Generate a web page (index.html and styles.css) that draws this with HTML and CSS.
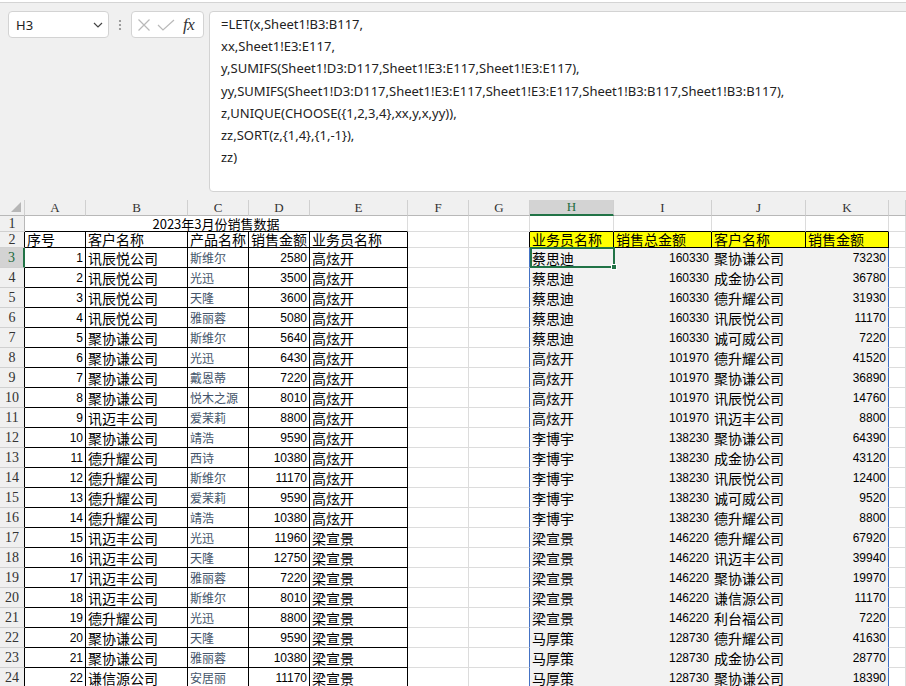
FILE: index.html
```html
<!DOCTYPE html>
<html lang="zh-CN">
<head>
<meta charset="utf-8">
<title>Sheet1</title>
<link rel="stylesheet" href="styles.css">
</head>
<body>
<div class="ribbon"></div>
<div class="fbar">
  <div class="namebox"><span>H3</span>
    <svg class="chev" width="10" height="6" viewBox="0 0 10 6"><path d="M1 1 L5 5 L9 1" fill="none" stroke="#444" stroke-width="1.2"/></svg>
  </div>
  <div class="dots"><svg width="4" height="12" viewBox="0 0 4 12"><circle cx="2" cy="2" r="1.1" fill="#8a8a8a"/><circle cx="2" cy="6" r="1.1" fill="#8a8a8a"/><circle cx="2" cy="10" r="1.1" fill="#8a8a8a"/></svg></div>
  <div class="fbtns">
    <svg width="14" height="14" viewBox="0 0 14 14"><path d="M1.5 1.5 L12.5 12.5 M12.5 1.5 L1.5 12.5" stroke="#b9b9b9" stroke-width="1.2" fill="none"/></svg>
    <svg width="18" height="12" viewBox="0 0 18 12"><path d="M1 6 L6 11 L17 1" stroke="#b9b9b9" stroke-width="1.2" fill="none"/></svg>
    <span class="fx">fx</span>
  </div>
  <div class="formula">
    <div>=LET(x,Sheet1!B3:B117,</div>
    <div>xx,Sheet1!E3:E117,</div>
    <div>y,SUMIFS(Sheet1!D3:D117,Sheet1!E3:E117,Sheet1!E3:E117),</div>
    <div>yy,SUMIFS(Sheet1!D3:D117,Sheet1!E3:E117,Sheet1!E3:E117,Sheet1!B3:B117,Sheet1!B3:B117),</div>
    <div>z,UNIQUE(CHOOSE({1,2,3,4},xx,y,x,yy)),</div>
    <div>zz,SORT(z,{1,4},{1,-1}),</div>
    <div>zz)</div>
  </div>
</div>
<div class="sheet">
  <div class="h corner"><div class="tri"></div></div>
  <div class="h">A</div><div class="h">B</div><div class="h">C</div><div class="h">D</div><div class="h">E</div><div class="h">F</div><div class="h">G</div><div class="h act">H</div><div class="h">I</div><div class="h">J</div><div class="h">K</div><div class="h"></div>

  <div class="r">1</div><div class="c t">2023年3月份销售数据</div><div class="c"></div><div class="c"></div><div class="c bb"></div><div class="c bb"></div><div class="c bb"></div><div class="c bb"></div><div class="c"></div>

  <div class="r bk">2</div><div class="c b hd">序号</div><div class="c b hd">客户名称</div><div class="c b hd">产品名称</div><div class="c b hd">销售金额</div><div class="c b hd">业务员名称</div><div class="c"></div><div class="c gb"></div><div class="c y">业务员名称</div><div class="c y">销售总金额</div><div class="c y">客户名称</div><div class="c y">销售金额</div><div class="c"></div>

  <div class="r act">3</div><div class="c b n">1</div><div class="c b">讯辰悦公司</div><div class="c b p">斯维尔</div><div class="c b n">2580</div><div class="c b">高炫开</div><div class="c"></div><div class="c gs"></div><div class="c s ac">蔡思迪<span class="sel"><span class="handle"></span></span></div><div class="c s n">160330</div><div class="c s">聚协谦公司</div><div class="c s k n">73230</div><div class="c"></div>

  <div class="r bk">4</div><div class="c b n">2</div><div class="c b">讯辰悦公司</div><div class="c b p">光迅</div><div class="c b n">3500</div><div class="c b">高炫开</div><div class="c"></div><div class="c gs"></div><div class="c s">蔡思迪</div><div class="c s n">160330</div><div class="c s">成金协公司</div><div class="c s k n">36780</div><div class="c"></div>

  <div class="r bk">5</div><div class="c b n">3</div><div class="c b">讯辰悦公司</div><div class="c b p">天隆</div><div class="c b n">3600</div><div class="c b">高炫开</div><div class="c"></div><div class="c gs"></div><div class="c s">蔡思迪</div><div class="c s n">160330</div><div class="c s">德升耀公司</div><div class="c s k n">31930</div><div class="c"></div>

  <div class="r bk">6</div><div class="c b n">4</div><div class="c b">讯辰悦公司</div><div class="c b p">雅丽蓉</div><div class="c b n">5080</div><div class="c b">高炫开</div><div class="c"></div><div class="c gs"></div><div class="c s">蔡思迪</div><div class="c s n">160330</div><div class="c s">讯辰悦公司</div><div class="c s k n">11170</div><div class="c"></div>

  <div class="r bk">7</div><div class="c b n">5</div><div class="c b">聚协谦公司</div><div class="c b p">斯维尔</div><div class="c b n">5640</div><div class="c b">高炫开</div><div class="c"></div><div class="c gs"></div><div class="c s">蔡思迪</div><div class="c s n">160330</div><div class="c s">诚可威公司</div><div class="c s k n">7220</div><div class="c"></div>

  <div class="r bk">8</div><div class="c b n">6</div><div class="c b">聚协谦公司</div><div class="c b p">光迅</div><div class="c b n">6430</div><div class="c b">高炫开</div><div class="c"></div><div class="c gs"></div><div class="c s">高炫开</div><div class="c s n">101970</div><div class="c s">德升耀公司</div><div class="c s k n">41520</div><div class="c"></div>

  <div class="r bk">9</div><div class="c b n">7</div><div class="c b">聚协谦公司</div><div class="c b p">戴恩蒂</div><div class="c b n">7220</div><div class="c b">高炫开</div><div class="c"></div><div class="c gs"></div><div class="c s">高炫开</div><div class="c s n">101970</div><div class="c s">聚协谦公司</div><div class="c s k n">36890</div><div class="c"></div>

  <div class="r bk">10</div><div class="c b n">8</div><div class="c b">聚协谦公司</div><div class="c b p">悦木之源</div><div class="c b n">8010</div><div class="c b">高炫开</div><div class="c"></div><div class="c gs"></div><div class="c s">高炫开</div><div class="c s n">101970</div><div class="c s">讯辰悦公司</div><div class="c s k n">14760</div><div class="c"></div>

  <div class="r bk">11</div><div class="c b n">9</div><div class="c b">讯迈丰公司</div><div class="c b p">爱茉莉</div><div class="c b n">8800</div><div class="c b">高炫开</div><div class="c"></div><div class="c gs"></div><div class="c s">高炫开</div><div class="c s n">101970</div><div class="c s">讯迈丰公司</div><div class="c s k n">8800</div><div class="c"></div>

  <div class="r bk">12</div><div class="c b n">10</div><div class="c b">聚协谦公司</div><div class="c b p">靖浩</div><div class="c b n">9590</div><div class="c b">高炫开</div><div class="c"></div><div class="c gs"></div><div class="c s">李博宇</div><div class="c s n">138230</div><div class="c s">聚协谦公司</div><div class="c s k n">64390</div><div class="c"></div>

  <div class="r bk">13</div><div class="c b n">11</div><div class="c b">德升耀公司</div><div class="c b p">西诗</div><div class="c b n">10380</div><div class="c b">高炫开</div><div class="c"></div><div class="c gs"></div><div class="c s">李博宇</div><div class="c s n">138230</div><div class="c s">成金协公司</div><div class="c s k n">43120</div><div class="c"></div>

  <div class="r bk">14</div><div class="c b n">12</div><div class="c b">德升耀公司</div><div class="c b p">斯维尔</div><div class="c b n">11170</div><div class="c b">高炫开</div><div class="c"></div><div class="c gs"></div><div class="c s">李博宇</div><div class="c s n">138230</div><div class="c s">讯辰悦公司</div><div class="c s k n">12400</div><div class="c"></div>

  <div class="r bk">15</div><div class="c b n">13</div><div class="c b">德升耀公司</div><div class="c b p">爱茉莉</div><div class="c b n">9590</div><div class="c b">高炫开</div><div class="c"></div><div class="c gs"></div><div class="c s">李博宇</div><div class="c s n">138230</div><div class="c s">诚可威公司</div><div class="c s k n">9520</div><div class="c"></div>

  <div class="r bk">16</div><div class="c b n">14</div><div class="c b">德升耀公司</div><div class="c b p">靖浩</div><div class="c b n">10380</div><div class="c b">高炫开</div><div class="c"></div><div class="c gs"></div><div class="c s">李博宇</div><div class="c s n">138230</div><div class="c s">德升耀公司</div><div class="c s k n">8800</div><div class="c"></div>

  <div class="r bk">17</div><div class="c b n">15</div><div class="c b">讯迈丰公司</div><div class="c b p">光迅</div><div class="c b n">11960</div><div class="c b">梁宣景</div><div class="c"></div><div class="c gs"></div><div class="c s">梁宣景</div><div class="c s n">146220</div><div class="c s">德升耀公司</div><div class="c s k n">67920</div><div class="c"></div>

  <div class="r bk">18</div><div class="c b n">16</div><div class="c b">讯迈丰公司</div><div class="c b p">天隆</div><div class="c b n">12750</div><div class="c b">梁宣景</div><div class="c"></div><div class="c gs"></div><div class="c s">梁宣景</div><div class="c s n">146220</div><div class="c s">讯迈丰公司</div><div class="c s k n">39940</div><div class="c"></div>

  <div class="r bk">19</div><div class="c b n">17</div><div class="c b">讯迈丰公司</div><div class="c b p">雅丽蓉</div><div class="c b n">7220</div><div class="c b">梁宣景</div><div class="c"></div><div class="c gs"></div><div class="c s">梁宣景</div><div class="c s n">146220</div><div class="c s">聚协谦公司</div><div class="c s k n">19970</div><div class="c"></div>

  <div class="r bk">20</div><div class="c b n">18</div><div class="c b">讯迈丰公司</div><div class="c b p">斯维尔</div><div class="c b n">8010</div><div class="c b">梁宣景</div><div class="c"></div><div class="c gs"></div><div class="c s">梁宣景</div><div class="c s n">146220</div><div class="c s">谦信源公司</div><div class="c s k n">11170</div><div class="c"></div>

  <div class="r bk">21</div><div class="c b n">19</div><div class="c b">德升耀公司</div><div class="c b p">光迅</div><div class="c b n">8800</div><div class="c b">梁宣景</div><div class="c"></div><div class="c gs"></div><div class="c s">梁宣景</div><div class="c s n">146220</div><div class="c s">利台福公司</div><div class="c s k n">7220</div><div class="c"></div>

  <div class="r bk">22</div><div class="c b n">20</div><div class="c b">聚协谦公司</div><div class="c b p">天隆</div><div class="c b n">9590</div><div class="c b">梁宣景</div><div class="c"></div><div class="c gs"></div><div class="c s">马厚策</div><div class="c s n">128730</div><div class="c s">德升耀公司</div><div class="c s k n">41630</div><div class="c"></div>

  <div class="r bk">23</div><div class="c b n">21</div><div class="c b">聚协谦公司</div><div class="c b p">雅丽蓉</div><div class="c b n">10380</div><div class="c b">梁宣景</div><div class="c"></div><div class="c gs"></div><div class="c s">马厚策</div><div class="c s n">128730</div><div class="c s">成金协公司</div><div class="c s k n">28770</div><div class="c"></div>

  <div class="r bk">24</div><div class="c b n">22</div><div class="c b">谦信源公司</div><div class="c b p">安居丽</div><div class="c b n">11170</div><div class="c b">梁宣景</div><div class="c"></div><div class="c gs"></div><div class="c s">马厚策</div><div class="c s n">128730</div><div class="c s">聚协谦公司</div><div class="c s k n">18390</div><div class="c"></div>
</div>
</body>
</html>
```

FILE: styles.css
```css
* { box-sizing: border-box; }
html, body { margin: 0; padding: 0; }
body {
  width: 906px;
  height: 686px;
  overflow: hidden;
  background: #f0f0f0;
  font-family: "Noto Sans", "Noto Sans CJK SC", sans-serif;
}
.ribbon {
  height: 3px;
  background: #ffffff;
  border-bottom: 1px solid #d4d4d4;
}
.fbar {
  display: flex;
  align-items: flex-start;
  height: 197px;
  padding: 8px 0 0 8px;
}
.namebox {
  width: 101px;
  height: 27px;
  background: #fff;
  border: 1px solid #d3d3d3;
  border-radius: 4px;
  display: flex;
  align-items: center;
  justify-content: space-between;
  padding: 0 5px 0 7px;
  font-size: 13px;
  color: #222;
}
.dots {
  width: 22px;
  height: 27px;
  display: flex;
  align-items: center;
  justify-content: center;
}
.fbtns {
  width: 73px;
  height: 27px;
  background: #fff;
  border: 1px solid #d3d3d3;
  border-radius: 4px;
  display: flex;
  align-items: center;
  gap: 6px;
  padding: 0 0 0 5px;
}
.fx {
  font-family: "Liberation Serif", serif;
  font-style: italic;
  font-size: 17px;
  color: #333;
  margin-left: 2px;
  letter-spacing: -0.5px;
}
.formula {
  flex: 1;
  margin-left: 5px;
  margin-right: -8px;
  height: 181px;
  background: #fff;
  border: 1px solid #d3d3d3;
  border-radius: 4px;
  padding: 1px 0 0 11px;
  font-size: 13px;
  line-height: 22.2px;
  color: #222;
  white-space: nowrap;
  overflow: hidden;
}
.sheet {
  display: grid;
  grid-template-columns: 25px 61px 102px 61px 61px 98px 61px 61px 84px 98px 94px 83px 17px;
  grid-template-rows: 16px 16px 16px repeat(22, 20px);
  background: #fff;
}
.h {
  background: #f0f0f0;
  border-right: 1px solid #d0d0d0;
  border-bottom: 1px solid #b8b8b8;
  font-family: "Liberation Serif", serif;
  font-size: 13px;
  color: #333;
  display: flex;
  align-items: center;
  justify-content: center;
}
.h.act {
  background: #d3d3d3;
  color: #1d6b40;
  border-bottom: 2px solid #217346;
}
.corner {
  justify-content: flex-end;
  align-items: flex-end;
  padding: 0 3px 3px 0;
}
.tri {
  width: 10px;
  height: 10px;
  background: #b6b6b6;
  clip-path: polygon(100% 0, 100% 100%, 0 100%);
}
.r {
  background: #f0f0f0;
  border-right: 1px solid #b8b8b8;
  border-bottom: 1px solid #d0d0d0;
  font-family: "Liberation Serif", serif;
  font-size: 14px;
  color: #333;
  display: flex;
  align-items: center;
  justify-content: center;
}
.r.bk { border-right-color: #000; }
.r.act {
  background: #d3d3d3;
  color: #1d6b40;
  border-right: 2px solid #217346;
}
.c {
  border-right: 1px solid #dcdcdc;
  border-bottom: 1px solid #dcdcdc;
  font-family: "Noto Sans CJK SC", sans-serif;
  font-size: 14px;
  line-height: 18px;
  color: #000;
  white-space: nowrap;
  display: flex;
  align-items: flex-end;
  padding: 0 2px;
}
.t {
  grid-column: span 5;
  justify-content: center;
  border-right-color: #dcdcdc;
  border-bottom-color: #000;
  font-size: 13px;
  line-height: 15px;
  padding-left: 0;
  padding-right: 0;
}
.hd { line-height: 15px; }
.b { border-right-color: #000; border-bottom-color: #000; }
.bb { border-bottom-color: #000; }
.gb { border-right-color: #000; }
.gs { border-right-color: #4472c4; }
.y {
  background: #ffff00;
  border-right-color: #000;
  border-bottom-color: #000;
  line-height: 15px;
}
.s {
  background: #f2f2f2;
  border-right-color: #f2f2f2;
  border-bottom-color: #f2f2f2;
}
.s.k { border-right-color: #4472c4; }
.n {
  justify-content: flex-end;
  font-family: "Liberation Sans", sans-serif;
  font-size: 12px;
  line-height: 17px;
}
.p {
  font-size: 12px;
  color: #44546a;
  line-height: 18px;
}
.ac { position: relative; }
.sel {
  position: absolute;
  top: -1px;
  left: 0;
  right: -2px;
  bottom: -1px;
  border: 2px solid #217346;
  z-index: 2;
}
.handle {
  position: absolute;
  right: -4px;
  bottom: -4px;
  width: 6px;
  height: 6px;
  background: #217346;
  border: 1px solid #fff;
}
```
